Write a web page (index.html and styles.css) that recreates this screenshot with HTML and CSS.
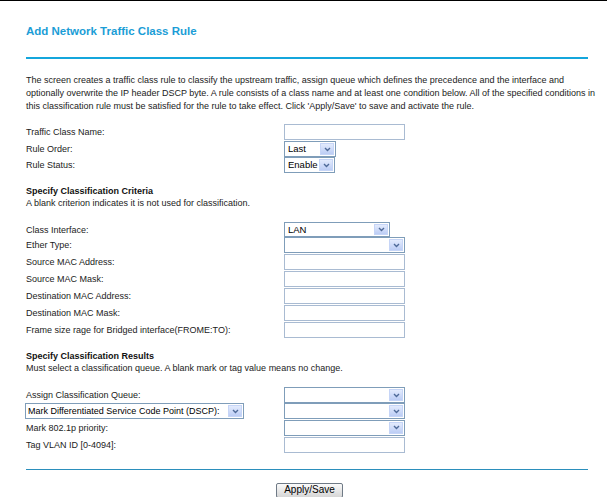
FILE: index.html
```html
<!DOCTYPE html>
<html>
<head>
<meta charset="utf-8">
<title>Add Network Traffic Class Rule</title>
<link rel="stylesheet" href="styles.css">
</head>
<body>
<div class="page">
  <h1 class="title">Add Network Traffic Class Rule</h1>
  <div class="rule-top"></div>
  <p class="intro">The screen creates a traffic class rule to classify the upstream traffic, assign queue which defines the precedence and the interface and optionally overwrite the IP header DSCP byte. A rule consists of a class name and at least one condition below. All of the specified conditions in this classification rule must be satisfied for the rule to take effect. Click 'Apply/Save' to save and activate the rule.</p>

  <div class="form first">
    <div class="row h18"><span class="lbl">Traffic Class Name:</span><input class="txt" type="text"></div>
    <div class="row h16"><span class="lbl">Rule Order:</span><div class="sel w52"><span class="val">Last</span><span class="arrow"><svg width="7" height="5" viewBox="0 0 7 5"><path d="M1 1 L3.5 3.5 L6 1" fill="none" stroke="#4f6a98" stroke-width="1.4"/></svg></span></div></div>
    <div class="row h16"><span class="lbl">Rule Status:</span><div class="sel w51"><span class="val">Enable</span><span class="arrow"><svg width="7" height="5" viewBox="0 0 7 5"><path d="M1 1 L3.5 3.5 L6 1" fill="none" stroke="#4f6a98" stroke-width="1.4"/></svg></span></div></div>
  </div>

  <div class="section">
    <div class="sec-head">Specify Classification Criteria</div>
    <div class="sec-sub">A blank criterion indicates it is not used for classification.</div>
  </div>

  <div class="form">
    <div class="row h15"><span class="lbl">Class Interface:</span><div class="sel w106 t15"><span class="val">LAN</span><span class="arrow"><svg width="7" height="5" viewBox="0 0 7 5"><path d="M1 1 L3.5 3.5 L6 1" fill="none" stroke="#4f6a98" stroke-width="1.4"/></svg></span></div></div>
    <div class="row h16"><span class="lbl">Ether Type:</span><div class="sel w121"><span class="val"></span><span class="arrow"><svg width="7" height="5" viewBox="0 0 7 5"><path d="M1 1 L3.5 3.5 L6 1" fill="none" stroke="#4f6a98" stroke-width="1.4"/></svg></span></div></div>
    <div class="row h17"><span class="lbl">Source MAC Address:</span><input class="txt" type="text"></div>
    <div class="row h17"><span class="lbl">Source MAC Mask:</span><input class="txt" type="text"></div>
    <div class="row h17"><span class="lbl">Destination MAC Address:</span><input class="txt" type="text"></div>
    <div class="row h17"><span class="lbl">Destination MAC Mask:</span><input class="txt" type="text"></div>
    <div class="row h17"><span class="lbl">Frame size rage for Bridged interface(FROME:TO):</span><input class="txt" type="text"></div>
  </div>

  <div class="section">
    <div class="sec-head">Specify Classification Results</div>
    <div class="sec-sub">Must select a classification queue. A blank mark or tag value means no change.</div>
  </div>

  <div class="form">
    <div class="row h16"><span class="lbl">Assign Classification Queue:</span><div class="sel w121"><span class="val"></span><span class="arrow"><svg width="7" height="5" viewBox="0 0 7 5"><path d="M1 1 L3.5 3.5 L6 1" fill="none" stroke="#4f6a98" stroke-width="1.4"/></svg></span></div></div>
    <div class="row h16"><div class="sel w220 lead"><span class="val small">Mark Differentiated Service Code Point (DSCP):</span><span class="arrow"><svg width="7" height="5" viewBox="0 0 7 5"><path d="M1 1 L3.5 3.5 L6 1" fill="none" stroke="#4f6a98" stroke-width="1.4"/></svg></span></div><div class="sel w121"><span class="val"></span><span class="arrow"><svg width="7" height="5" viewBox="0 0 7 5"><path d="M1 1 L3.5 3.5 L6 1" fill="none" stroke="#4f6a98" stroke-width="1.4"/></svg></span></div></div>
    <div class="row h17"><span class="lbl">Mark 802.1p priority:</span><div class="sel w121"><span class="val"></span><span class="arrow"><svg width="7" height="5" viewBox="0 0 7 5"><path d="M1 1 L3.5 3.5 L6 1" fill="none" stroke="#4f6a98" stroke-width="1.4"/></svg></span></div></div>
    <div class="row h17"><span class="lbl">Tag VLAN ID [0-4094]:</span><input class="txt" type="text"></div>
  </div>

  <div class="rule-bottom"></div>
  <div class="actions"><button class="btn" type="button">Apply/Save</button></div>
</div>
</body>
</html>
```

FILE: styles.css
```css
html, body {
  margin: 0;
  padding: 0;
  background: #ffffff;
}
body {
  border-top: 1px solid #000000;
  font-family: "Liberation Sans", Arial, sans-serif;
  color: #222222;
}
.page {
  padding: 22px 0 0 26px;
  width: 562px;
}
.title {
  margin: 0;
  font-size: 11.5px;
  line-height: 16px;
  font-weight: bold;
  color: #1b9dd6;
}
.rule-top {
  margin-top: 18px;
  height: 2px;
  background: #14a6dc;
}
.intro {
  margin: 15px 0 0 0;
  width: 575px;
  font-size: 9px;
  line-height: 13px;
  color: #222222;
}
.form {
  margin-top: 13px;
  display: flex;
  flex-direction: column;
}
.form.first {
  margin-top: 10px;
}
.row {
  display: grid;
  grid-template-columns: 258px auto;
  align-items: center;
}
.h15 { height: 15px; }
.h16 { height: 16px; }
.h17 { height: 17px; }
.h18 { height: 18px; }
.lbl {
  font-size: 9px;
  line-height: 12px;
  color: #222222;
  white-space: nowrap;
}
.txt {
  box-sizing: border-box;
  width: 121px;
  height: 16px;
  margin: 0;
  padding: 0 2px;
  border: 1px solid #a9bbd2;
  background: #ffffff;
  font-family: inherit;
  font-size: 10px;
}
.sel {
  box-sizing: border-box;
  height: 16px;
  display: flex;
  align-items: stretch;
  border: 1px solid #7f9db9;
  background: #ffffff;
  padding: 1px;
}
.sel.t15 { height: 15px; }
.val {
  flex: 1;
  min-width: 0;
  padding-left: 2px;
  font-size: 9.5px;
  line-height: 12px;
  color: #000000;
  white-space: nowrap;
  overflow: hidden;
}
.val.small {
  font-size: 9px;
  padding-left: 1px;
}
.arrow {
  width: 14px;
  flex: none;
  display: flex;
  align-items: center;
  justify-content: center;
  background: linear-gradient(#e3ebfd, #bccdf5);
  border: 1px solid #c6d5f7;
  box-sizing: border-box;
}
.w52 { width: 52px; }
.w51 { width: 51px; }
.w106 { width: 106px; }
.w121 { width: 121px; }
.w220 { width: 219px; }
.lead { margin-left: -1px; }
.section {
  margin-top: 12px;
}
.sec-head {
  font-size: 9px;
  line-height: 12px;
  font-weight: bold;
  color: #111111;
}
.sec-sub {
  font-size: 9px;
  line-height: 12px;
  color: #222222;
}
.rule-bottom {
  margin-top: 16px;
  height: 1px;
  background: #2b8fbc;
}
.actions {
  margin-top: 9px;
  padding-left: 250px;
}
.btn {
  box-sizing: border-box;
  width: 67px;
  height: 15px;
  margin: 0;
  padding: 0;
  border: 1px solid #6f7a86;
  border-radius: 2px;
  background: linear-gradient(#fbfbfb, #e4e4e4 60%, #d6d6d6);
  font-family: inherit;
  font-size: 10px;
  line-height: 12px;
  color: #000000;
}
```
